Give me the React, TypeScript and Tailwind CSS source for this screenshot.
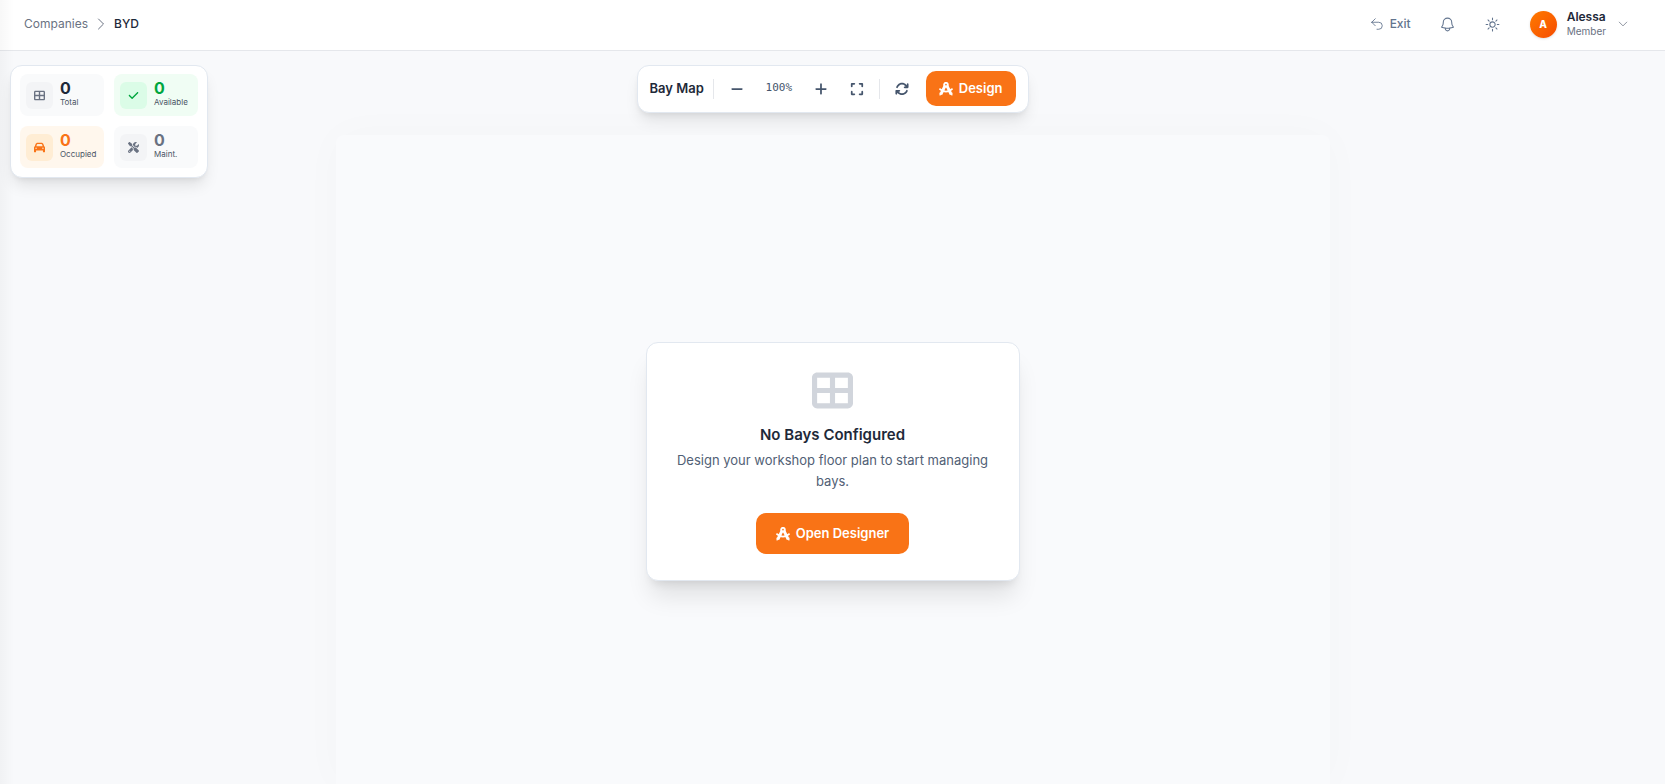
import type { ReactNode } from "react";
import {
  HiOutlineArrowUturnLeft,
  HiOutlineBell,
  HiOutlineChevronDown,
  HiOutlineChevronRight,
  HiOutlineSun,
} from "react-icons/hi2";
import {
  FaArrowsRotate,
  FaCar,
  FaCheck,
  FaExpand,
  FaMinus,
  FaPlus,
  FaScrewdriverWrench,
  FaTableCellsLarge,
} from "react-icons/fa6";

function CompassIcon() {
  return (
    <svg viewBox="0 0 24 24" className="size-[14px] shrink-0" fill="none" stroke="currentColor" aria-hidden="true">
      <circle cx="12" cy="4.6" r="3.1" strokeWidth="3.4" />
      <path d="M10 7 3.6 20.5M14 7l6.4 13.5" strokeWidth="5" />
      <path d="M1.4 22.8v-4.2l4.2 2.2zM22.6 22.8v-4.2l-4.2 2.2z" fill="currentColor" strokeWidth="1" />
      <path d="M1.8 12.4c5 5.6 15.4 5.6 20.4 0" strokeWidth="3.2" strokeLinecap="round" />
    </svg>
  );
}

type StatProps = {
  icon: ReactNode;
  value: number;
  label: string;
  card: string;
  tile: string;
  tone: string;
};

function Stat({ icon, value, label, card, tile, tone }: StatProps) {
  return (
    <div className={`flex h-[42px] items-center gap-[7px] rounded-lg px-[6px] ${card}`}>
      <span className={`flex size-[27px] shrink-0 items-center justify-center rounded-md text-[11px] ${tile}`}>
        {icon}
      </span>
      <div className="pb-[3px]">
        <div className={`text-base leading-4 font-bold ${tone}`}>{value}</div>
        <div className="text-[8px] leading-[12px] text-gray-600">{label}</div>
      </div>
    </div>
  );
}

function ToolButton({ label, children }: { label: string; children: ReactNode }) {
  return (
    <button
      type="button"
      aria-label={label}
      className="flex size-7 items-center justify-center rounded-lg text-sm text-slate-600 hover:bg-slate-100"
    >
      {children}
    </button>
  );
}

function Header() {
  return (
    <header className="flex h-[51px] items-center justify-between border-b border-gray-200 bg-white pr-9 pl-6">
      <nav aria-label="Breadcrumb" className="flex items-center gap-[5px] pb-[2px] text-xs">
        <a href="#companies" className="text-gray-500">
          Companies
        </a>
        <HiOutlineChevronRight className="size-4 text-gray-500" />
        <span aria-current="page" className="font-medium text-gray-800">
          BYD
        </span>
      </nav>
      <div className="flex items-center pb-[2px] text-slate-500">
        <a href="#exit" className="mr-7 flex items-center gap-[6px] text-xs font-medium">
          <HiOutlineArrowUturnLeft className="size-[14px]" />
          Exit
        </a>
        <button type="button" aria-label="Notifications" className="mr-7">
          <HiOutlineBell className="size-[17px]" />
        </button>
        <button type="button" aria-label="Switch theme" className="mr-[29px]">
          <HiOutlineSun className="size-[17px]" />
        </button>
        <button type="button" className="flex items-center gap-[10px] text-left">
          <span className="flex size-[27px] items-center justify-center rounded-full bg-linear-to-br from-[#ff7a00] to-[#f54a00] text-[10px] font-extrabold text-white shadow-sm">
            A
          </span>
          <span className="flex flex-col">
            <span className="text-xs leading-[15px] font-semibold text-gray-800">Alessa</span>
            <span className="text-[10px] leading-[15px] text-gray-500">Member</span>
          </span>
          <HiOutlineChevronDown className="ml-px size-3 text-gray-500" />
        </button>
      </div>
    </header>
  );
}

export default function App() {
  return (
    <div className="relative flex min-h-screen flex-col bg-[#f8f9fb] font-['Inter',sans-serif]">
      <Header />
      <main className="relative flex flex-1 flex-col overflow-hidden">
        <div className="flex flex-1 items-center justify-center px-4 pt-[84px]">
          <div className="flex w-full max-w-[994px] flex-1 self-stretch rounded-t-lg bg-[#f9fafc] shadow-[0_0_44px_rgba(0,0,0,0.025)]">
            <section className="m-auto mt-[207px] flex w-[374px] flex-col items-center rounded-xl border border-slate-200 bg-white px-7 pt-[27px] pb-[26px] text-center shadow-xl">
              <FaTableCellsLarge className="size-[41px] text-gray-300" />
              <h2 className="mt-3 text-[15px] leading-6 font-semibold text-gray-800">No Bays Configured</h2>
              <p className="mt-[3px] text-[13px] leading-[21px] text-[#516075]">
                Design your workshop floor plan to start managing bays.
              </p>
              <button
                type="button"
                className="mt-[21px] flex h-[41px] items-center gap-[6px] rounded-[10px] bg-[#f97316] px-5 text-[13px] font-semibold text-white"
              >
                <CompassIcon />
                Open Designer
              </button>
            </section>
          </div>
        </div>

        <section
          aria-label="Bay statistics"
          className="absolute top-[14px] left-[10px] grid grid-cols-[84px_84px] gap-[10px] rounded-xl border border-slate-200 bg-white px-[9px] pt-2 pb-[9px] shadow-lg"
        >
          <Stat icon={<FaTableCellsLarge />} value={0} label="Total" card="bg-gray-50" tile="bg-gray-100 text-gray-500" tone="text-gray-800" />
          <Stat icon={<FaCheck />} value={0} label="Available" card="bg-green-50" tile="bg-green-100 text-green-600" tone="text-green-600" />
          <Stat icon={<FaCar />} value={0} label="Occupied" card="bg-orange-50" tile="bg-orange-100 text-[#f97316]" tone="text-[#f97316]" />
          <Stat icon={<FaScrewdriverWrench />} value={0} label="Maint." card="bg-gray-50" tile="bg-gray-100 text-gray-500" tone="text-gray-500" />
        </section>

        <div
          role="toolbar"
          aria-label="Bay map tools"
          className="absolute top-[14px] left-1/2 flex h-12 -translate-x-1/2 items-center rounded-xl border border-slate-200 bg-white px-3 pb-px whitespace-nowrap shadow-lg"
        >
          <h1 className="text-[13px] font-semibold text-gray-800">Bay Map</h1>
          <span className="mx-[9px] h-5 w-px bg-gray-200" />
          <ToolButton label="Zoom out">
            <FaMinus />
          </ToolButton>
          <span className="mx-2 w-10 text-center font-['DejaVu_Sans_Mono',monospace] text-[11px] text-slate-600">100%</span>
          <ToolButton label="Zoom in">
            <FaPlus />
          </ToolButton>
          <span className="ml-2 flex">
            <ToolButton label="Fit to screen">
              <FaExpand />
            </ToolButton>
          </span>
          <span className="mx-2 h-5 w-px bg-gray-200" />
          <ToolButton label="Refresh">
            <FaArrowsRotate />
          </ToolButton>
          <button
            type="button"
            className="ml-[10px] flex h-[35px] items-center gap-[6px] rounded-[10px] bg-[#f97316] px-[13px] text-[13px] font-semibold text-white"
          >
            <CompassIcon />
            Design
          </button>
        </div>
      </main>
      <div aria-hidden="true" className="pointer-events-none absolute inset-y-0 left-0 w-[14px] bg-linear-to-r from-black/3 to-transparent" />
    </div>
  );
}
